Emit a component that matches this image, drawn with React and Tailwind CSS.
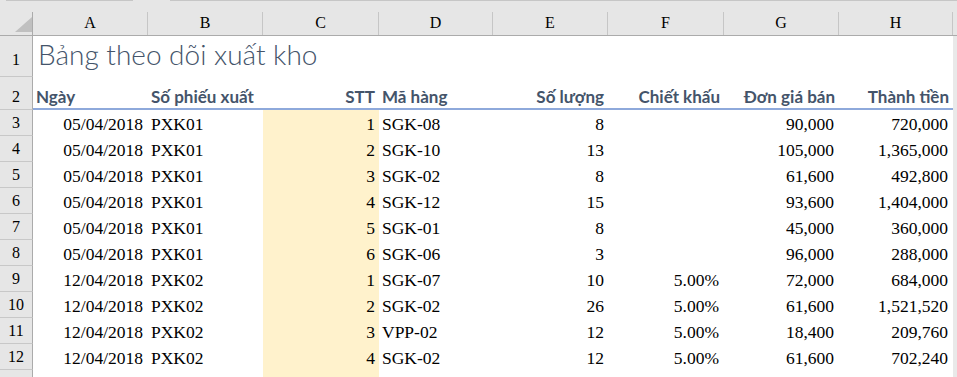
import React from 'react';

const COLS = 'grid grid-cols-[33px_115px_115px_116px_114px_115px_116px_115px_114px_1fr]';
const serif = { fontFamily: '"Liberation Serif", "Times New Roman", serif' };
const sans = { fontFamily: 'Lato, "Open Sans", sans-serif' };

const rows = [
  ['05/04/2018', 'PXK01', 1, 'SGK-08', 8, '', '90,000', '720,000'],
  ['05/04/2018', 'PXK01', 2, 'SGK-10', 13, '', '105,000', '1,365,000'],
  ['05/04/2018', 'PXK01', 3, 'SGK-02', 8, '', '61,600', '492,800'],
  ['05/04/2018', 'PXK01', 4, 'SGK-12', 15, '', '93,600', '1,404,000'],
  ['05/04/2018', 'PXK01', 5, 'SGK-01', 8, '', '45,000', '360,000'],
  ['05/04/2018', 'PXK01', 6, 'SGK-06', 3, '', '96,000', '288,000'],
  ['12/04/2018', 'PXK02', 1, 'SGK-07', 10, '5.00%', '72,000', '684,000'],
  ['12/04/2018', 'PXK02', 2, 'SGK-02', 26, '5.00%', '61,600', '1,521,520'],
  ['12/04/2018', 'PXK02', 3, 'VPP-02', 12, '5.00%', '18,400', '209,760'],
  ['12/04/2018', 'PXK02', 4, 'SGK-02', 12, '5.00%', '61,600', '702,240'],
];

function RowNum({ n, className = '' }) {
  return (
    <div
      className={`flex items-end justify-center bg-[#e6e6e6] border-r border-r-[#ababab] border-b border-b-[#c8c8c8] text-[16px] leading-[20px] text-black ${className}`}
      style={serif}
    >
      {n}
    </div>
  );
}

function Cell({ children, right, className = '' }) {
  return (
    <div
      className={`flex items-end overflow-visible whitespace-nowrap text-[17.5px] leading-[21px] text-black ${right ? 'justify-end pr-[5px]' : 'pl-[3px]'} ${className}`}
      style={serif}
    >
      {children}
    </div>
  );
}

function Head({ children, right }) {
  return (
    <div
      className={`flex items-end whitespace-nowrap pb-[1px] text-[17px] font-bold leading-[20px] text-[#44546a] ${right ? 'justify-end pr-[4px]' : 'pl-[3px]'}`}
      style={sans}
    >
      {children}
    </div>
  );
}

export default function App() {
  const letters = ['A', 'B', 'C', 'D', 'E', 'F', 'G', 'H'];
  return (
    <div className="h-[377px] w-[957px] overflow-hidden bg-white">
      {/* strip above the column headers */}
      <div className="relative h-[12px] bg-[#e6e6e6]">
        <div className="absolute left-[6px] top-0 h-px w-[127px] bg-[#c6c6c6]" />
        <div className="absolute left-[170px] right-0 top-0 h-px bg-[#c6c6c6]" />
      </div>

      {/* column letters */}
      <div className={`${COLS} h-[24px] bg-[#e6e6e6] border-b border-b-[#ababab]`}>
        <div className="relative border-r border-r-[#ababab]">
          <svg className="absolute left-[15px] top-[5px]" width="17" height="15" viewBox="0 0 17 15">
            <polygon points="17,0 17,15 0,15" fill="#c0c0c0" />
          </svg>
        </div>
        {letters.map((l) => (
          <div
            key={l}
            className="flex items-end justify-center border-r border-r-[#c6c6c6] pb-[2px] text-[16px] leading-[20px] text-black"
            style={serif}
          >
            {l}
          </div>
        ))}
        <div />
      </div>

      {/* row 1: title */}
      <div className={`${COLS} h-[41px]`}>
        <RowNum n={1} className="pb-[6px]" />
        <div className="col-span-8 flex items-end pb-[6px] pl-[5px]">
          <span className="text-[28px] font-light leading-[34px] text-[#44546a]" style={sans}>
            Bảng theo dõi xuất kho
          </span>
        </div>
        <div className="bg-[#e9e9e9]" />
      </div>

      {/* row 2: headers */}
      <div className={`${COLS} h-[33px]`}>
        <RowNum n={2} className="pb-[2px]" />
        <div className="col-span-8 grid grid-cols-[115px_115px_116px_114px_115px_116px_115px_114px] border-b-2 border-b-[#8ea9db]">
          <Head>Ngày</Head>
          <Head>Số phiếu xuất</Head>
          <Head right>STT</Head>
          <Head>Mã hàng</Head>
          <Head right>Số lượng</Head>
          <Head right>Chiết khấu</Head>
          <Head right>Đơn giá bán</Head>
          <Head right>Thành tiền</Head>
        </div>
        <div className="bg-[#e9e9e9]" />
      </div>

      {/* data rows */}
      {rows.map((r, i) => (
        <div key={i} className={`${COLS} h-[26px]`}>
          <RowNum n={i + 3} className="pb-[2px]" />
          <Cell right className="pb-[1px]">{r[0]}</Cell>
          <Cell className="pb-[1px]">{r[1]}</Cell>
          <Cell right className="bg-[#fff2cc] pb-[1px] !pr-[4px]">{r[2]}</Cell>
          <Cell className="pb-[1px]">{r[3]}</Cell>
          <Cell right className="pb-[1px] !pr-[4px]">{r[4]}</Cell>
          <Cell right className="pb-[1px]">{r[5]}</Cell>
          <Cell right className="pb-[1px]">{r[6]}</Cell>
          <Cell right className="pb-[1px]">{r[7]}</Cell>
          <div className="bg-[#e9e9e9]" />
        </div>
      ))}

      {/* row 13, only its top edge shows */}
      <div className={`${COLS} h-[26px]`}>
        <RowNum n="" />
        <div />
        <div />
        <div className="bg-[#fff2cc]" />
        <div />
        <div />
        <div />
        <div />
        <div />
        <div className="bg-[#e9e9e9]" />
      </div>
    </div>
  );
}
